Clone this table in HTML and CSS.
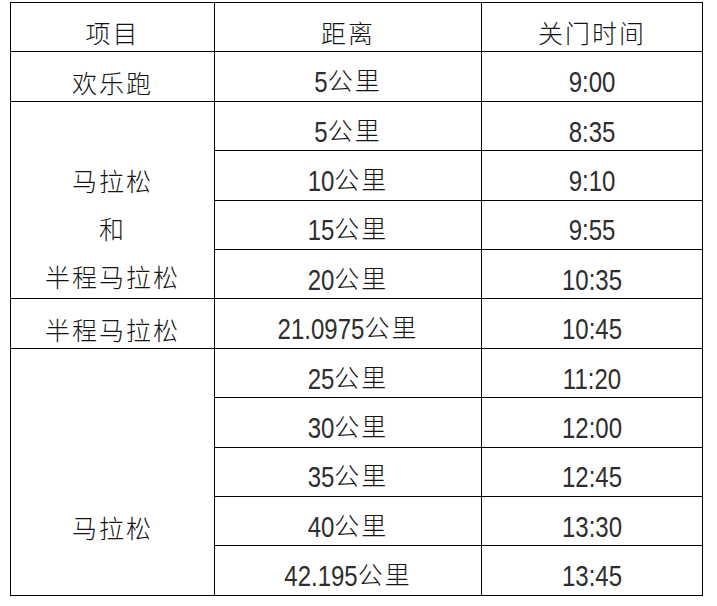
FILE: index.html
```html
<!DOCTYPE html>
<html lang="zh-CN">
<head>
<meta charset="utf-8">
<title>关门时间</title>
<link rel="stylesheet" href="styles.css">
</head>
<body>
<table class="grid">
  <colgroup>
    <col class="c1">
    <col class="c2">
    <col class="c3">
  </colgroup>
  <tr>
    <td>项目</td>
    <td>距离</td>
    <td>关门时间</td>
  </tr>
  <tr>
    <td>欢乐跑</td>
    <td><span class="n">5</span>公里</td>
    <td><span class="n">9:00</span></td>
  </tr>
  <tr>
    <td rowspan="4" class="multi">
      <div class="stack">
        <div>马拉松</div>
        <div>和</div>
        <div>半程马拉松</div>
      </div>
    </td>
    <td><span class="n">5</span>公里</td>
    <td><span class="n">8:35</span></td>
  </tr>
  <tr>
    <td><span class="n">10</span>公里</td>
    <td><span class="n">9:10</span></td>
  </tr>
  <tr>
    <td><span class="n">15</span>公里</td>
    <td><span class="n">9:55</span></td>
  </tr>
  <tr>
    <td><span class="n">20</span>公里</td>
    <td><span class="n">10:35</span></td>
  </tr>
  <tr>
    <td>半程马拉松</td>
    <td><span class="n">21.0975</span>公里</td>
    <td><span class="n">10:45</span></td>
  </tr>
  <tr>
    <td rowspan="5" class="low">马拉松</td>
    <td><span class="n">25</span>公里</td>
    <td><span class="n">11:20</span></td>
  </tr>
  <tr>
    <td><span class="n">30</span>公里</td>
    <td><span class="n">12:00</span></td>
  </tr>
  <tr>
    <td><span class="n">35</span>公里</td>
    <td><span class="n">12:45</span></td>
  </tr>
  <tr>
    <td><span class="n">40</span>公里</td>
    <td><span class="n">13:30</span></td>
  </tr>
  <tr>
    <td><span class="n">42.195</span>公里</td>
    <td><span class="n">13:45</span></td>
  </tr>
</table>
</body>
</html>
```
FILE: styles.css
```css
html, body {
  margin: 0;
  padding: 0;
  background: #fff;
}

body {
  font-family: "Noto Sans CJK SC", "Noto Sans", sans-serif;
  color: #151515;
}

.grid {
  margin: 2px 0 0 10px;
  width: 692px;
  table-layout: fixed;
  border-collapse: collapse;
}

.c1 { width: 204px; }
.c2 { width: 267px; }
.c3 { width: 221px; }

.grid tr {
  height: 49.42px;
}

.grid td {
  border: 1px solid #000;
  padding: 10px 0 0 0;
  text-align: center;
  vertical-align: middle;
  font-size: 25px;
  font-weight: 300;
  letter-spacing: 2px;
  line-height: 30px;
  white-space: nowrap;
}

/* narrow, tall digits (Arial Narrow look) */
.n {
  display: inline-block;
  font-family: "Liberation Sans", Arial, sans-serif;
  font-size: 24px;
  font-weight: 400;
  letter-spacing: 0;
  line-height: 30px;
  vertical-align: -2px;
  transform: scaleY(1.22);
  transform-origin: 50% 23px;
  color: #2e2e2e;
}

.grid td.multi {
  vertical-align: top;
  padding-top: 66px;
}

.stack {
  display: flex;
  flex-direction: column;
  gap: 23px;
  line-height: 1;
}

.grid td.low {
  vertical-align: bottom;
  padding: 0 0 55px 0;
  line-height: 25px;
}
```
